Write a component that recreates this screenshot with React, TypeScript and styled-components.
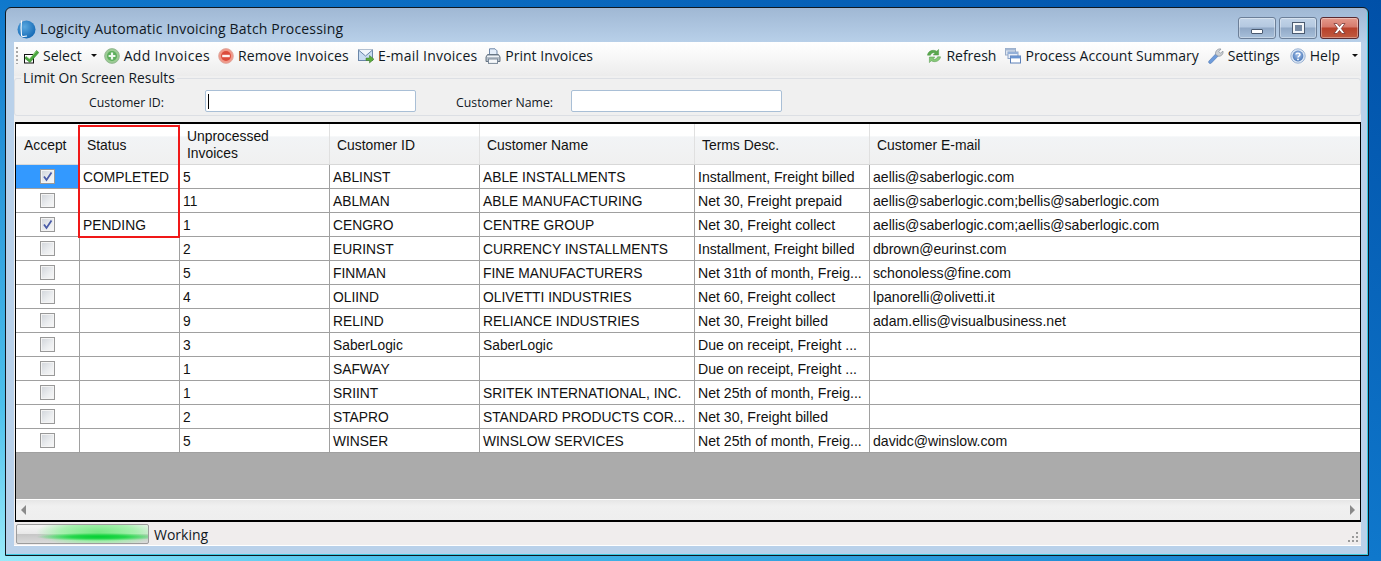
import React from "react";
import styled, { createGlobalStyle } from "styled-components";

const Global = createGlobalStyle`
  html, body { margin: 0; height: 100%; overflow: hidden; }
  body { background: linear-gradient(to top right, #9aeafa 0%, #4cc0ec 14%, #0f78cc 50%, #0050a8 100%); }
  #root { height: 100%; }
`;

const Page = styled.div`
  box-sizing: border-box;
  width: 1381px;
  height: 561px;
  padding: 7px 12px 5px 5px;
  display: flex;
  font-family: "Open Sans", "Noto Sans", sans-serif;
`;

const Win = styled.div`
  flex: 1;
  display: flex;
  flex-direction: column;
  box-sizing: border-box;
  border: 1px solid #101820;
  border-radius: 6px 6px 0 0;
  padding: 0 7px 9px 8px;
  background: linear-gradient(to bottom, #a0b8d4 0px, #b9d1ea 36px);
  box-shadow: inset -1px -1px 0 #3cc8e0;
`;

const TitleBar = styled.div`
  height: 34px;
  flex: none;
  display: flex;
  align-items: flex-start;
`;
const TitleIcon = styled.svg`
  width: 20px;
  height: 20px;
  margin: 11px 4px 0 2px;
  flex: none;
`;
const TitleText = styled.div`
  font-size: 14px;
  line-height: 20px;
  margin-top: 11px;
  color: #10181f;
  letter-spacing: 0.012em;
`;
const WinButtons = styled.div`
  margin-left: auto;
  margin-top: 9px;
  margin-right: 2px;
  display: flex;
  gap: 3px;
`;
const WinBtn = styled.div<{ $w: number; $close?: boolean }>`
  width: ${(p) => p.$w}px;
  height: 22px;
  box-sizing: border-box;
  border-radius: 3px;
  border: 1px solid ${(p) => (p.$close ? "#5a2a30" : "#6c7f98")};
  box-shadow: inset 0 0 0 1px rgba(255, 255, 255, 0.35);
  background: ${(p) =>
    p.$close
      ? "linear-gradient(to bottom, #e49a8c 0%, #d67a6c 45%, #b8402a 50%, #c05a40 100%)"
      : "linear-gradient(to bottom, #c2d4e8 0%, #b4c8e0 45%, #90a8c6 50%, #a8c0da 100%)"};
  display: flex;
  align-items: center;
  justify-content: center;
`;
const MinGlyph = styled.div`
  width: 12px;
  height: 5px;
  margin-top: 7px;
  background: #fff;
  border: 1px solid #4a5a70;
  border-radius: 1px;
  box-sizing: border-box;
`;
const MaxGlyph = styled.div`
  width: 11px;
  height: 10px;
  box-sizing: border-box;
  border: 2px solid #f4f6f8;
  outline: 1px solid #4a5a70;
  background: #7488a2;
`;
const CloseGlyph = styled.svg`
  width: 15px;
  height: 13px;
`;

const Client = styled.div`
  flex: 1;
  min-height: 0;
  display: flex;
  flex-direction: column;
  background: #f0f0f0;
`;

const Toolbar = styled.div`
  height: 34px;
  flex: none;
  margin-bottom: -5px;
  display: flex;
  align-items: flex-start;
  padding: 4px 0 0 2px;
  box-sizing: border-box;
  background: linear-gradient(to bottom, #ffffff 0%, #fafafa 30%, #ececec 100%);
  font-size: 14px;
  color: #10181f;
`;
const Grip = styled.div`
  width: 2px;
  height: 17px;
  margin: 1px 5px 0 0;
  background: repeating-linear-gradient(to bottom, #a8a8a8 0 2px, transparent 2px 4px);
`;
const ToolItem = styled.div<{ $gap?: number; $ls?: number }>`
  display: flex;
  align-items: center;
  height: 19px;
  gap: 4px;
  margin-right: ${(p) => p.$gap ?? 9}px;
  white-space: nowrap;
  line-height: 19px;
  letter-spacing: ${(p) => p.$ls ?? 0}px;
`;
const ToolIcon = styled.svg`
  width: 16px;
  height: 16px;
  flex: none;
`;
const Arrow = styled.div<{ $ml: number; $mr: number }>`
  width: 0;
  height: 0;
  flex: none;
  border-left: 3px solid transparent;
  border-right: 3px solid transparent;
  border-top: 3px solid #111;
  margin: 8px ${(p) => p.$mr}px 0 ${(p) => p.$ml}px;
`;
const Spacer = styled.div`
  flex: 1;
`;

const Group = styled.fieldset`
  flex: none;
  margin: 0;
  padding: 0;
  height: 45px;
  box-sizing: border-box;
  border: 1px solid #dcdfe4;
  border-radius: 3px;
  display: flex;
`;
const Legend = styled.legend`
  font-size: 13.8px;
  line-height: 14px;
  margin-left: 6px;
  padding: 0 2px;
  color: #10181f;
`;
const Fields = styled.div`
  display: flex;
  align-items: center;
  height: 22px;
  margin-top: 5px;
  padding-left: 74px;
`;
const FieldLabel = styled.span<{ $w: number }>`
  width: ${(p) => p.$w}px;
  font-size: 12.3px;
  color: #10181f;
  white-space: nowrap;
  padding-top: 2px;
`;
const TextBox = styled.div<{ $mr?: number }>`
  width: 211px;
  height: 22px;
  box-sizing: border-box;
  border: 1px solid #a9bfd6;
  border-radius: 2px;
  background: #fff;
  margin-right: ${(p) => p.$mr ?? 0}px;
  display: flex;
  align-items: center;
  padding-left: 2px;
`;
const Caret = styled.div`
  width: 1px;
  height: 15px;
  background: #000;
`;

const GridFrame = styled.div`
  flex: 1;
  min-height: 0;
  margin: 6px 0 0 1px;
  border: 1px solid #000;
  border-top-width: 2px;
  border-bottom-width: 2px;
  display: flex;
  flex-direction: column;
  background: #ababab;
  position: relative;
  font-family: "Liberation Sans", Arial, sans-serif;
  font-size: 13.8px;
  color: #111;
`;
const COLS = "64px 100px 150px 150px 215px 175px 1fr";
const HeadRow = styled.div`
  display: grid;
  grid-template-columns: ${COLS};
  height: 41px;
  flex: none;
  font-size: 13.9px;
  background: linear-gradient(to bottom, #ffffff 0%, #ffffff 30%, #f2f4f6 32%, #f0f0f0 100%);
  border-bottom: 1px solid #d8d8d8;
  box-sizing: border-box;
`;
const HeadCell = styled.div<{ $pl?: number; $pt?: number }>`
  display: flex;
  align-items: center;
  box-sizing: border-box;
  border-right: 1px solid #e0e0e0;
  padding: ${(p) => p.$pt ?? 3}px 0 0 ${(p) => p.$pl ?? 7}px;
  line-height: 17px;
  &:last-child { border-right: 0; }
`;
const Row = styled.div`
  display: grid;
  grid-template-columns: ${COLS};
  height: 24px;
  flex: none;
  background: #fff;
  border-bottom: 1px solid #a0a0a0;
  box-sizing: border-box;
`;
const Cell = styled.div<{ $fs?: number }>`
  display: flex;
  align-items: center;
  box-sizing: border-box;
  padding: 1px 0 0 3px;
  border-right: 1px solid #a0a0a0;
  white-space: nowrap;
  overflow: hidden;
  ${(p) => (p.$fs ? `font-size: ${p.$fs}px;` : "")}
  &:last-child { border-right: 0; }
`;
const CheckCell = styled(Cell)<{ $sel?: boolean }>`
  justify-content: center;
  padding: 0;
  background: ${(p) => (p.$sel ? "#3399ff" : "transparent")};
`;
const Box = styled.div`
  width: 15px;
  height: 15px;
  box-sizing: border-box;
  border: 1px solid #999;
  box-shadow: inset 0 0 0 1px #f4f4f4;
  display: flex;
  align-items: center;
  justify-content: center;
  background: linear-gradient(135deg, #d0d4da 0%, #eceef0 60%, #f8f8f8 100%);
  margin-top: -1px;
`;
const CheckMark = styled.svg`
  width: 11px;
  height: 11px;
`;
const Empty = styled.div`
  flex: 1;
  min-height: 0;
  background: #ababab;
`;
const ScrollBar = styled.div`
  flex: none;
  height: 21px;
  box-sizing: border-box;
  border-top: 1px solid #fff;
  background: linear-gradient(to bottom, #e6e6e6 0%, #f0f0f0 30%, #eeeeee 100%);
  display: flex;
  align-items: center;
  justify-content: space-between;
  padding: 0 5px;
`;
const ScrollArrow = styled.div<{ $right?: boolean }>`
  width: 0;
  height: 0;
  border-top: 5px solid transparent;
  border-bottom: 5px solid transparent;
  ${(p) => (p.$right ? "border-left: 5px solid #8a8a8a;" : "border-right: 5px solid #8a8a8a;")}
`;
const RedBox = styled.div`
  position: absolute;
  left: 62px;
  top: 1px;
  width: 102px;
  height: 113px;
  box-sizing: border-box;
  border: 2px solid #f01818;
  pointer-events: none;
`;

const StatusBar = styled.div`
  flex: none;
  height: 24px;
  box-sizing: border-box;
  background: #f0eded;
  border-bottom: 1px solid #fff;
  display: flex;
  align-items: center;
  padding: 1px 0 0 2px;
  font-size: 14px;
  color: #10181f;
  position: relative;
`;
const Progress = styled.div`
  width: 133px;
  height: 20px;
  box-sizing: border-box;
  border: 1px solid #9c9c9c;
  border-radius: 2px;
  margin-right: 5px;
  background:
    radial-gradient(ellipse 62px 4px at 62% 66%, #00d030 0%, rgba(0, 208, 48, 0.75) 45%, rgba(0, 208, 48, 0) 100%),
    radial-gradient(ellipse 62px 15px at 62% 40%, rgba(110, 232, 125, 0.95) 0%, rgba(150, 242, 160, 0.8) 60%, rgba(150, 242, 160, 0) 100%),
    linear-gradient(to bottom, #f6f6f6 0%, #e8e8e8 48%, #c6c6c6 50%, #dadada 100%);
`;
const ResizeGrip = styled.svg`
  position: absolute;
  right: 2px;
  bottom: 2px;
  width: 12px;
  height: 12px;
`;

const rows: [boolean, string, string, string, string, string, string][] = [
  [true, "COMPLETED", "5", "ABLINST", "ABLE INSTALLMENTS", "Installment, Freight billed", "aellis@saberlogic.com"],
  [false, "", "11", "ABLMAN", "ABLE MANUFACTURING", "Net 30, Freight prepaid", "aellis@saberlogic.com;bellis@saberlogic.com"],
  [true, "PENDING", "1", "CENGRO", "CENTRE GROUP", "Net 30, Freight collect", "aellis@saberlogic.com;aellis@saberlogic.com"],
  [false, "", "2", "EURINST", "CURRENCY INSTALLMENTS", "Installment, Freight billed", "dbrown@eurinst.com"],
  [false, "", "5", "FINMAN", "FINE MANUFACTURERS", "Net 31th of month, Freig...", "schonoless@fine.com"],
  [false, "", "4", "OLIIND", "OLIVETTI INDUSTRIES", "Net 60, Freight collect", "lpanorelli@olivetti.it"],
  [false, "", "9", "RELIND", "RELIANCE INDUSTRIES", "Net 30, Freight billed", "adam.ellis@visualbusiness.net"],
  [false, "", "3", "SaberLogic", "SaberLogic", "Due on receipt, Freight ...", ""],
  [false, "", "1", "SAFWAY", "", "Due on receipt, Freight ...", ""],
  [false, "", "1", "SRIINT", "SRITEK INTERNATIONAL, INC.", "Net 25th of month, Freig...", ""],
  [false, "", "2", "STAPRO", "STANDARD PRODUCTS COR...", "Net 30, Freight billed", ""],
  [false, "", "5", "WINSER", "WINSLOW SERVICES", "Net 25th of month, Freig...", "davidc@winslow.com"],
];

const IconSelect = () => (
  <ToolIcon viewBox="0 0 16 16">
    <rect x="1.5" y="6.5" width="9" height="8.5" fill="#fff" stroke="#111" />
    <path d="M3 8.5 6.5 11.5 13.5 2.5 15.8 4.5 7 14.5 2 10.5z" fill="#4aa83e" stroke="#2f8028" strokeWidth="0.6" />
    <path d="M4 9 6.5 10.8 13.3 3.3" fill="none" stroke="#9cdc80" strokeWidth="0.8" />
  </ToolIcon>
);
const IconAdd = () => (
  <ToolIcon viewBox="0 0 16 16">
    <circle cx="8" cy="8" r="7.4" fill="#9ccc94" stroke="#8cb08c" strokeWidth="0.8" />
    <circle cx="8" cy="8" r="5" fill="#5cae5c" />
    <path d="M8 4.6v6.8M4.6 8h6.8" stroke="#eef8ee" strokeWidth="2.2" />
  </ToolIcon>
);
const IconRemove = () => (
  <ToolIcon viewBox="0 0 16 16">
    <circle cx="8" cy="8" r="7.4" fill="#f09888" stroke="#dca8a0" strokeWidth="0.8" />
    <circle cx="8" cy="8" r="5" fill="#dc4c3c" />
    <path d="M4.2 8h7.6" stroke="#fdf2f0" strokeWidth="2.4" />
  </ToolIcon>
);
const IconMail = () => (
  <ToolIcon viewBox="0 0 16 16">
    <rect x="0.5" y="2" width="14" height="10.5" fill="#c8dcf2" stroke="#6a86a8" />
    <path d="M0.5 2 L7.5 8 L14.5 2" fill="#f0f6fc" stroke="#6a86a8" />
    <path d="M8 10h3.5V7.5L16 11.2 11.5 15v-2.5H8z" fill="#5cac3c" stroke="#3c7a28" strokeWidth="0.5" />
  </ToolIcon>
);
const IconPrint = () => (
  <ToolIcon viewBox="0 0 16 16">
    <path d="M4.5 7V0.8h5.5L12 2.8V7z" fill="#e4eefa" stroke="#7088a8" />
    <path d="M1 9 2.5 6.5h11L15 9v4.5H1z" fill="#b4bec8" stroke="#687684" />
    <rect x="3.5" y="11" width="9" height="4.4" fill="#f6f8fa" stroke="#7c8a9a" />
    <rect x="2" y="8" width="12" height="1" fill="#eef2f6" />
  </ToolIcon>
);
const IconRefresh = () => (
  <ToolIcon viewBox="0 0 16 16">
    <path d="M1.5 7.2C2 3.2 6.5 1 10.8 3.2L12.6 1.4V7H7.2L9 5.2C7 4.2 5 5.2 4.4 7.2z" fill="#5aa84e" stroke="#4a9442" strokeWidth="0.5" />
    <path d="M14.5 8.8C14 12.8 9.5 15 5.2 12.8L3.4 14.6V9h5.4L7 10.8C9 11.8 11 10.8 11.6 8.8z" fill="#86c878" stroke="#4a9442" strokeWidth="0.5" />
  </ToolIcon>
);
const IconProcess = () => (
  <ToolIcon viewBox="0 0 16 16">
    <rect x="0.5" y="0.5" width="10" height="6.5" fill="#dfe6f0" stroke="#98acc8" />
    <rect x="0.5" y="0.5" width="10" height="2" fill="#a4b8d4" />
    <rect x="3" y="4" width="10" height="6.5" fill="#e8eef8" stroke="#8ca4c8" />
    <rect x="3" y="4" width="10" height="2" fill="#94b0d8" />
    <rect x="5.5" y="8" width="10" height="7" fill="#fff" stroke="#5c80b8" />
    <rect x="5.5" y="8" width="10" height="2.4" fill="#6a94d0" />
  </ToolIcon>
);
const IconSettings = () => (
  <ToolIcon viewBox="0 0 16 16">
    <path d="M0.8 13.2 7.8 5.8 10.2 8 3.2 15.2a1.6 1.6 0 0 1-2.4-2z" fill="#6e9cdc" stroke="#5078b0" strokeWidth="0.6" />
    <path d="M7.6 6.5C7 3 9.8 0.3 13 1L10.8 3.6 12.4 5.2 15 3.2C15.6 6.4 12.6 9 9.8 8z" fill="#ccd0d4" stroke="#868e98" strokeWidth="0.7" />
  </ToolIcon>
);
const IconHelp = () => (
  <ToolIcon viewBox="0 0 16 16">
    <defs>
      <radialGradient id="helpG" cx="50%" cy="40%" r="60%">
        <stop offset="0%" stopColor="#a8c4ec" />
        <stop offset="100%" stopColor="#4a78b8" />
      </radialGradient>
    </defs>
    <circle cx="8" cy="8" r="7.2" fill="#dbe6f4" stroke="#9cb4d4" />
    <circle cx="8" cy="8" r="5.4" fill="url(#helpG)" />
    <path d="M6 6.5C6 4.6 10 4.6 10 6.6c0 1.4-2 1.4-2 3" fill="none" stroke="#fff" strokeWidth="1.4" />
    <circle cx="8" cy="11.4" r="0.9" fill="#fff" />
  </ToolIcon>
);

export default function App() {
  return (
    <>
      <Global />
      <Page>
        <Win>
          <TitleBar>
            <TitleIcon viewBox="0 0 20 20">
              <defs>
                <radialGradient id="logoG" cx="40%" cy="35%" r="75%">
                  <stop offset="0%" stopColor="#5aa8e0" />
                  <stop offset="100%" stopColor="#0c62b0" />
                </radialGradient>
              </defs>
              <circle cx="10.5" cy="10.5" r="9" fill="url(#logoG)" />
              <path d="M5.5 1.5C5 6 5 12 5.5 16.5c.3 1 2.5 1.2 5.5.5" fill="none" stroke="#fff" strokeWidth="1.1" />
            </TitleIcon>
            <TitleText>Logicity Automatic Invoicing Batch Processing</TitleText>
            <WinButtons>
              <WinBtn $w={38}><MinGlyph /></WinBtn>
              <WinBtn $w={38}><MaxGlyph /></WinBtn>
              <WinBtn $w={39} $close>
                <CloseGlyph viewBox="0 0 15 13">
                  <path d="M2 1.5h3L7.5 4.5 10 1.5h3L9.3 6.5 13 11.5h-3L7.5 8.5 5 11.5H2L5.7 6.5z" fill="#fff" stroke="#6a2a28" strokeWidth="0.7" />
                </CloseGlyph>
              </WinBtn>
            </WinButtons>
          </TitleBar>
          <Client>
            <Toolbar>
              <Grip />
              <ToolItem $gap={0}><IconSelect /><span>Select</span></ToolItem>
              <Arrow $ml={9} $mr={7} />
              <ToolItem $ls={0.33} $gap={8}><IconAdd /><span>Add Invoices</span></ToolItem>
              <ToolItem $ls={0.13} $gap={9}><IconRemove /><span>Remove Invoices</span></ToolItem>
              <ToolItem $ls={0.2} $gap={8}><IconMail /><span>E-mail Invoices</span></ToolItem>
              <ToolItem><IconPrint /><span>Print Invoices</span></ToolItem>
              <Spacer />
              <ToolItem><IconRefresh /><span>Refresh</span></ToolItem>
              <ToolItem><IconProcess /><span>Process Account Summary</span></ToolItem>
              <ToolItem $gap={10}><IconSettings /><span>Settings</span></ToolItem>
              <ToolItem $gap={0}><IconHelp /><span>Help</span></ToolItem>
              <Arrow $ml={12} $mr={3} />
            </Toolbar>
            <Group>
              <Legend>Limit On Screen Results</Legend>
              <Fields>
                <FieldLabel $w={116}>Customer ID:</FieldLabel>
                <TextBox $mr={40}><Caret /></TextBox>
                <FieldLabel $w={115}>Customer Name:</FieldLabel>
                <TextBox />
              </Fields>
            </Group>
            <GridFrame>
              <HeadRow>
                <HeadCell $pl={8}>Accept</HeadCell>
                <HeadCell>Status</HeadCell>
                <HeadCell $pt={1}>Unprocessed<br />Invoices</HeadCell>
                <HeadCell>Customer ID</HeadCell>
                <HeadCell>Customer Name</HeadCell>
                <HeadCell>Terms Desc.</HeadCell>
                <HeadCell>Customer E-mail</HeadCell>
              </HeadRow>
              {rows.map((r, i) => (
                <Row key={i}>
                  <CheckCell $sel={i === 0}>
                    <Box>
                      {r[0] && (
                        <CheckMark viewBox="0 0 11 11">
                          <path d="M2 5.5 4.5 9 9.5 1.5" fill="none" stroke="#4a5ca8" strokeWidth="1.8" />
                        </CheckMark>
                      )}
                    </Box>
                  </CheckCell>
                  <Cell>{r[1]}</Cell>
                  <Cell>{r[2]}</Cell>
                  <Cell>{r[3]}</Cell>
                  <Cell>{r[4]}</Cell>
                  <Cell $fs={14.1}>{r[5]}</Cell>
                  <Cell $fs={14.1}>{r[6]}</Cell>
                </Row>
              ))}
              <Empty />
              <ScrollBar>
                <ScrollArrow />
                <ScrollArrow $right />
              </ScrollBar>
              <RedBox />
            </GridFrame>
            <StatusBar>
              <Progress />
              <span>Working</span>
              <ResizeGrip viewBox="0 0 12 12">
                <path d="M9 1h2v2H9zM5 5h2v2H5zM9 5h2v2H9zM1 9h2v2H1zM5 9h2v2H5zM9 9h2v2H9z" fill="#9a9a9a" />
              </ResizeGrip>
            </StatusBar>
          </Client>
        </Win>
      </Page>
    </>
  );
}
